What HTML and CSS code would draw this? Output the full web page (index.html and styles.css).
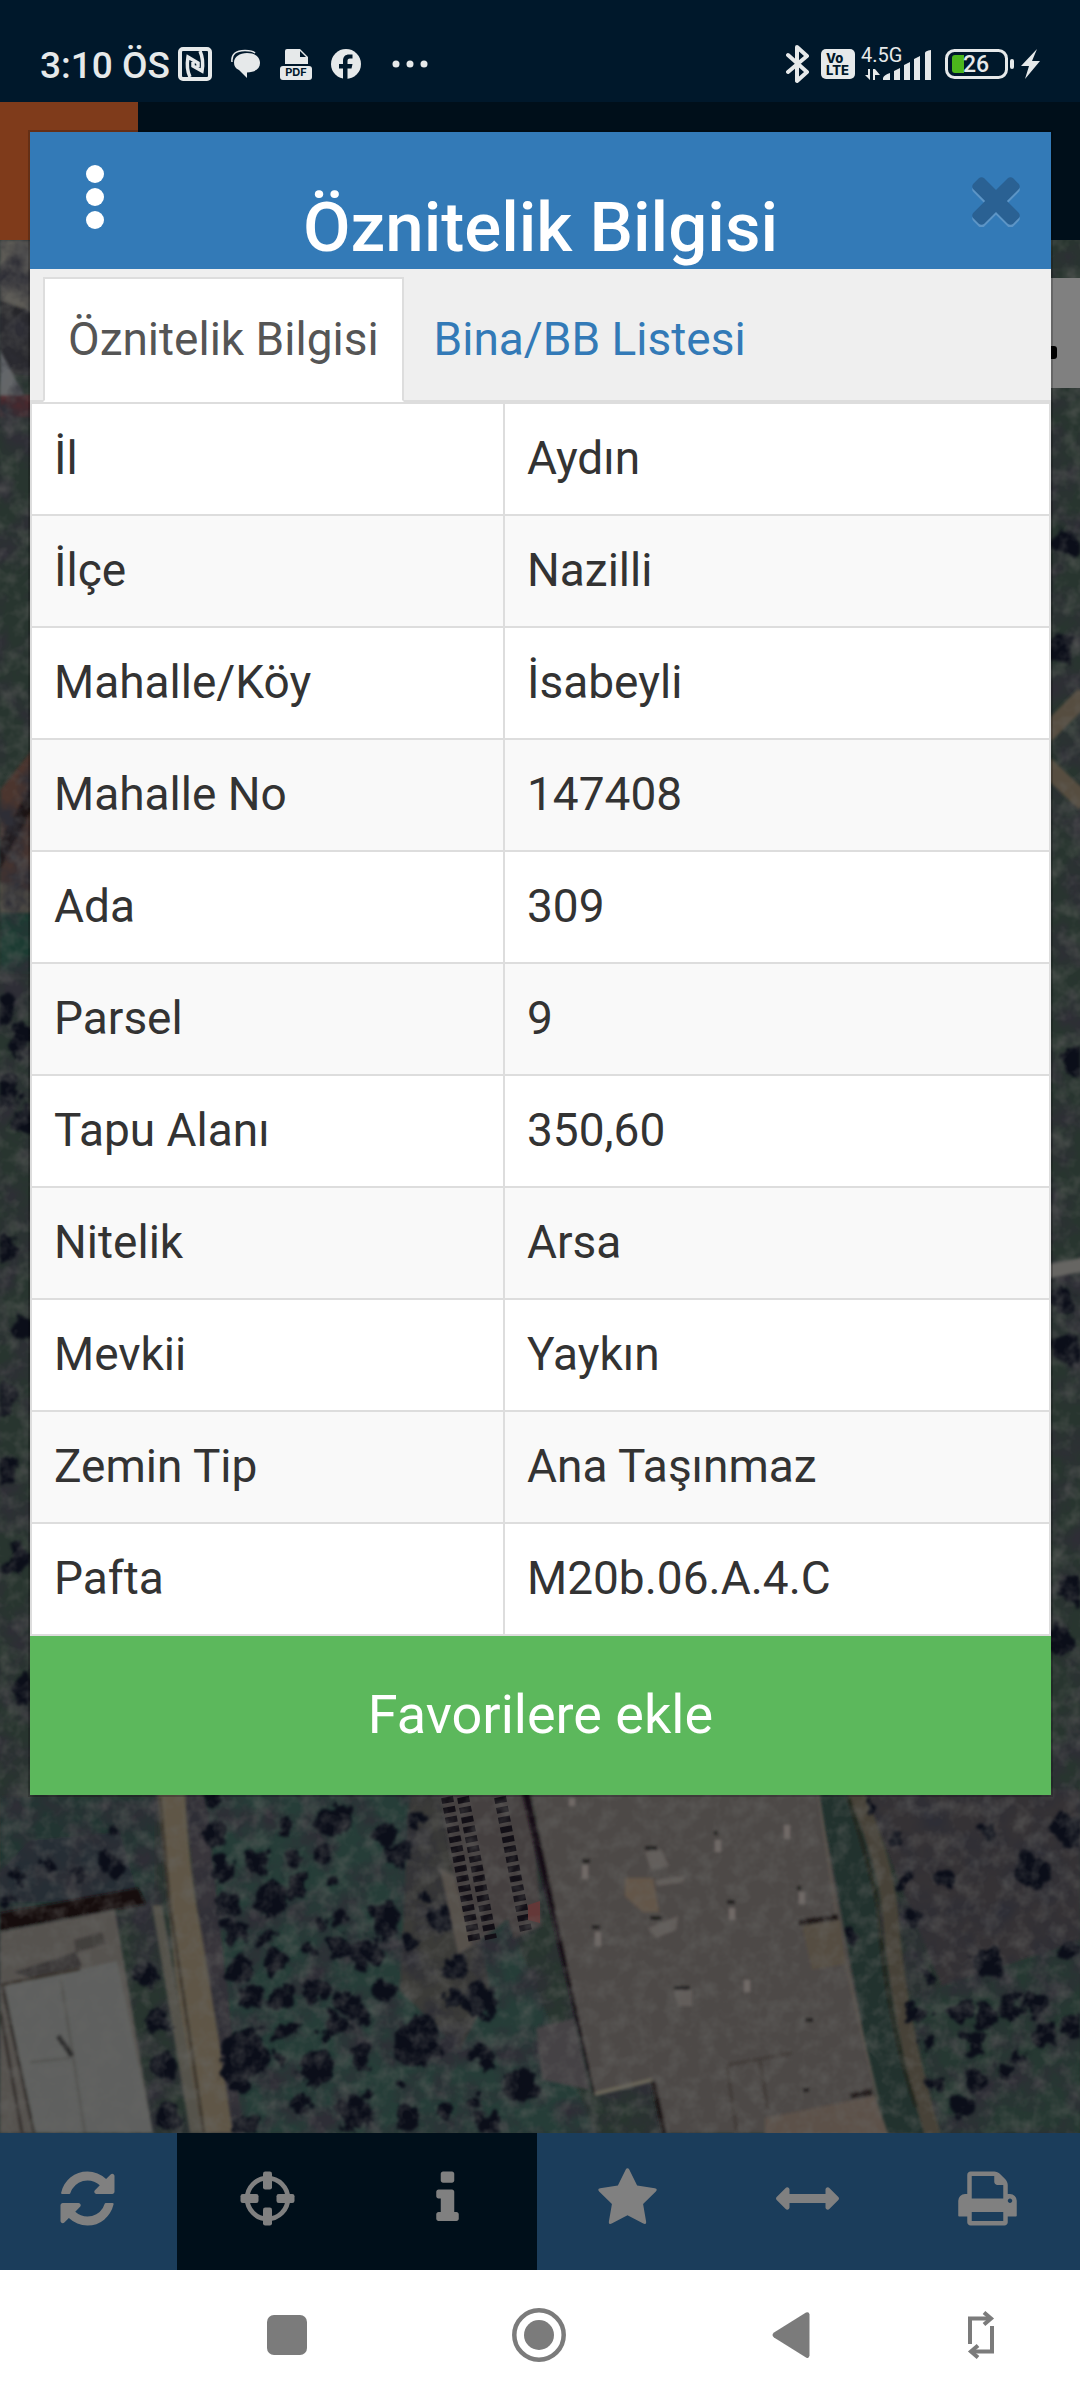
FILE: index.html
```html
<!DOCTYPE html>
<html lang="tr">
<head>
    <meta charset="UTF-8">
    <meta name="viewport" content="width=device-width, initial-scale=1.0">
    <title>Öznitelik Bilgisi</title>
    <link rel="stylesheet" href="styles.css">
</head>
<body>
    <div class="status-bar">
        <div class="status-left">
            <span class="clock">3:10 ÖS</span>
            <svg class="icon-nfc" width="34" height="34" viewBox="0 0 34 34" fill="none" stroke="currentColor">
                <rect x="2" y="2" width="30" height="30" rx="3" stroke-width="4"/>
                <path d="M12 30Q8 22 10 10L20 16V20M22 4Q26 13 24 24L15 19V15" stroke-width="3.500"/>
            </svg>
            <svg class="icon-chat" width="30" height="30" viewBox="0 0 30 30" fill="currentColor">
                <path d="M16 4c8 0 13 4 13 10s-5 9-13 9.500V29l-8-8C4.500 19.500 3 17 3 13.500 3 8 8.500 4 16 4z"/>
                <path d="M1 13C0 5 5 1.500 14 1.500c6 0 8 .5 10 2.500" fill="none" stroke="currentColor" stroke-width="1.500"/>
            </svg>
            <svg class="icon-pdf" width="32" height="32" viewBox="0 0 32 32" fill="currentColor">
                <path d="M5 3q0-2 2-2h13l8 8v7H5z"/>
                <path d="M20 3v6h6z" fill="#00182b"/>
                <rect x="0" y="18" width="32" height="14" rx="3"/>
                <text x="16" y="28" class="pdf-text" text-anchor="middle">PDF</text>
            </svg>
            <svg class="icon-fb" width="30" height="30" viewBox="0 0 30 30">
                <circle cx="15" cy="15" r="15" fill="currentColor"/>
                <path d="M12 31V19.500H8V15h4v-3c0-4.500 2.500-6.500 6-6.500h3.500v4H19c-2 0-2.500 1-2.500 2.500v3h5l-1 4.500h-4V31z" fill="#00182b"/>
            </svg>
            <svg class="icon-more" width="36" height="8" viewBox="0 0 36 8" fill="currentColor">
                <circle cx="4" cy="4" r="3.500"/><circle cx="18" cy="4" r="3.500"/><circle cx="32" cy="4" r="3.500"/>
            </svg>
        </div>
        <div class="status-right">
            <svg width="24" height="40" viewBox="0 0 24 40" fill="none" stroke="currentColor" stroke-width="4" stroke-linejoin="round" stroke-linecap="round">
                <path d="M2 11l19 17-10 9V3l10 9L2 28"/>
            </svg>
            <svg width="34" height="30" viewBox="0 0 34 30">
                <rect width="34" height="30" rx="5" fill="currentColor"/>
                <text class="volte-text" x="5" y="14">Vo</text>
                <text class="volte-text" x="5" y="26">LTE</text>
            </svg>
            <svg class="icon-signal" width="72" height="50" viewBox="0 -8 72 50" fill="currentColor">
                <text class="net-text" x="0" y="15">4.5G</text>
                <path d="M4 28l5 5V22H7v6zM12 22v11h2v-5h5l-5-6z"/>
                <path d="M22 33v-2q1-3 7-5v7zM33 33v-9l6-3v12zM43 33V18l6-3v18zM53 33V12l6-3v24zM64 33V6q0-2 6-3v30z"/>
            </svg>
            <svg class="icon-battery" width="70" height="30" viewBox="0 0 70 30">
                <rect x="1.500" y="1.500" width="60" height="27" rx="8" fill="none" stroke="currentColor" stroke-width="3"/>
                <path d="M19 6h-9q-3 0-3 3v12q0 3 3 3h9z" fill="#4cb71c"/>
                <rect x="65" y="10" width="4" height="10" rx="2" fill="currentColor"/>
                <text class="battery-text" x="18" y="23">26</text>
            </svg>
            <svg class="icon-bolt" width="20" height="30" viewBox="0 0 20 30" fill="currentColor">
                <path d="M16 0L0 17h8L4 30l15-18h-8z"/>
            </svg>
        </div>
    </div>

    <div class="app">
        <div class="app-header">
            <div class="app-logo"></div>
        </div>

        <div class="map">
            <svg class="map-image" viewBox="0 240 1080 1893" preserveAspectRatio="xMidYMax slice" aria-hidden="true">
                <defs>
                    <filter id="rough" x="0" y="240" width="1080" height="1893" filterUnits="userSpaceOnUse" color-interpolation-filters="sRGB">
                        <feTurbulence type="fractalNoise" baseFrequency="0.060" numOctaves="3" seed="4" result="n"/>
                        <feDisplacementMap in="SourceGraphic" in2="n" scale="24" xChannelSelector="R" yChannelSelector="G"/>
                        <feGaussianBlur stdDeviation="1.500"/>
                    </filter>
                    <!-- dark patches on the ground -->
                    <filter id="patches" x="0" y="0" width="100%" height="100%" color-interpolation-filters="sRGB">
                        <feTurbulence type="fractalNoise" baseFrequency="0.030" numOctaves="4" seed="9"/>
                        <feColorMatrix values="0 0 0 0 0.180  0 0 0 0 0.180  0 0 0 0 0.210  0 2.400 0 0 -0.900"/>
                    </filter>
                    <!-- light mottling over everything -->
                    <filter id="grain" x="0" y="0" width="100%" height="100%" color-interpolation-filters="sRGB">
                        <feTurbulence type="fractalNoise" baseFrequency="0.060" numOctaves="3" seed="2"/>
                        <feColorMatrix values="0 0 0 0 0.400  0 0 0 0 0.400  0 0 0 0 0.390  1 0 0 0 -0.420"/>
                    </filter>
                    <filter id="soft"><feGaussianBlur stdDeviation="1.500"/></filter>
                </defs>
                <rect y="240" width="1080" height="1893" fill="#28352f"/>

                <!-- left edge -->
                <g filter="url(#soft)">
                    <path d="M0 240h40v90L0 310z" fill="#5c5a55"/>
                    <path d="M0 300l40 15v60H0z" fill="#28252b"/>
                    <path d="M0 350l24 45H0z" fill="#64666a"/>
                    <path d="M0 395h40v22H0z" fill="#52282c"/>
                    <path d="M0 790l40-50v160H0z" fill="#4b342d"/>
                    <path d="M0 840l40-70v26L0 870z" fill="#170e0f"/>
                    <path d="M0 882l40 12v18H0z" fill="#5d584b"/>
                    <path d="M0 912h40v60H0z" fill="#1e3a30"/>
                </g>

                <!-- fields -->
                <g filter="url(#soft)">
                    <path d="M0 1797h155v110H0z" fill="#243530"/>
                    <path d="M30 1840l90-8 20 70H0v-30z" fill="#282d36"/>
                    <path d="M185 1790h270l140 343H233z" fill="#283d37"/>
                    <path d="M183 1790h22l38 343h-20z" fill="#39363b"/>
                    <path d="M410 1790h40l40 200-30 60-60-60z" fill="#3b3b37"/>
                    <path d="M862 1790h218v177l-130 40z" fill="#353236"/>
                    <path d="M900 2000l180-60v193H930z" fill="#283733"/>
                </g>
                <rect y="240" width="1080" height="1893" filter="url(#patches)"/>

                <!-- dirt roads -->
                <g filter="url(#soft)" fill="none" stroke="#574e41">
                    <path d="M1045 735l40-40M1045 765l40 38" stroke-width="18"/>
                    <path d="M1045 1272l40-8" stroke="#666562" stroke-width="14"/>
                    <path d="M157 1790h28q4 80 16 140l18 110 14 93h-35l-23-160z" fill="#5f5647" stroke="none"/>
                    <path d="M152 1905h10l40 228h-12z" fill="#54534b" stroke="none"/>
                    <path d="M160 1797l10 110 34 226" stroke="#37332a" stroke-width="3"/>
                    <path d="M818 1790h40l32 190 40 153h-50z" fill="#20322f" stroke="none"/>
                    <path d="M855 1790q30 70 35 120 8 110 43 225" stroke="#474239" stroke-width="16"/>
                    <path d="M848 1797q20 60 30 110 8 110 38 200" stroke="#20261f" stroke-width="4"/>
                </g>

                <!-- trees -->
                <g filter="url(#rough)" stroke="#0b0e19" stroke-linecap="round" fill="none">
                    <path stroke-width="50" d="M416 2040h.1M245 2055h.1"/>
                    <path stroke-width="34" d="M335 1820h.1M272 1900h.1M385 1920h.1M365 1950h.1M318 2070h.1M1035 1870h.1M1070 1830h.1M520 2085h.1M480 2000h.1M235 2075h.1M355 2115h.1M990 1965h.1"/>
                    <path stroke-width="24" d="M215 1800h.1M215 1833h.1M396 1855h.1M385 1835h.1M255 1860h.1M222 1870h.1M297 1885h.1M226 1905h.1M235 1935h.1M240 1970h.1M250 2000h.1M275 1962h.1M340 1950h.1M279 1996h.1M315 1990h.1M345 2000h.1M385 1992h.1M360 2015h.1M285 2030h.1M335 2025h.1M362 2055h.1M300 2102h.1M440 1920h.1M455 1965h.1M485 2057h.1M408 2115h.1M490 2125h.1M245 2128h.1M145 1975h.1M155 2022h.1M162 2063h.1M168 2115h.1M960 2010h.1M920 2015h.1M985 2015h.1M1010 2010h.1M1035 2005h.1M1045 2035h.1M975 2040h.1M980 2080h.1M960 2105h.1M1075 2025h.1M1068 1950h.1"/>
                    <path stroke-width="15" d="M283 1827h.1M416 1820h.1M330 1880h.1M295 1857h.1M320 1853h.1M340 1915h.1M323 1922h.1M268 1935h.1M308 1950h.1M410 1940h.1M425 1900h.1M322 2035h.1M400 2085h.1M365 2092h.1M455 2000h.1M475 2105h.1M445 2110h.1M280 2060h.1M105 1860h.1M118 1870h.1M115 1830h.1M15 1875h.1M50 1865h.1M80 1875h.1M10 1900h.1M895 1837h.1M905 1880h.1M945 1880h.1M988 1828h.1M915 1917h.1M850 1935h.1M872 1805h.1M930 1980h.1M925 2040h.1M935 2085h.1M1005 2070h.1M1020 2055h.1"/>
                    <path stroke-width="28" d="M2 1010h.1M22 1040h.1M5 1090h.1M26 1120h.1M4 1250h.1M22 1330h.1M3 1470h.1M18 1560h.1M26 1690h.1M1 1400h.1M1070 545h.1M1060 650h.1M1076 1060h.1M1066 1350h.1M1060 1300h.1M1075 1590h.1M1058 1640h.1"/>
                </g>

                <!-- warehouse on the left -->
                <g filter="url(#soft)">
                    <path d="M0 1913l138-25 8 16L0 1931z" fill="#120d11"/>
                    <path d="M0 1932l115-22 38 223H0z" fill="#565350"/>
                    <path d="M5 1984l76-15 36-8 36 172H32z" fill="#5f605e"/>
                    <path d="M14 1972l62-20 6 14-50 12z" fill="#3a3837"/>
                    <path d="M74 1940l28-8 4 12-30 9z" fill="#433f3c"/>
                    <path d="M2 1984l32 149M0 2010l22 123" stroke="#322d2b" stroke-width="3" fill="none"/>
                    <path d="M61 1980l24 153M30 2062l40-4" stroke="#555553" stroke-width="3" fill="none"/>
                    <path d="M58 2036l14 20" stroke="#2b2b2b" stroke-width="5"/>
                    <path d="M0 1985l80-16" stroke="#37302c" stroke-width="3"/>
                </g>

                <!-- parking rows -->
                <g filter="url(#soft)">
                    <path d="M440 1790h90l12 135-28 14-6-20-36 28-18-70z" fill="#454140"/>
                    <path d="M440 1868l14 8 18 70-14 8z" fill="#57514c"/>
                </g>
                <g stroke="#120f16" stroke-width="12" stroke-dasharray="6 4" fill="none">
                    <path d="M447 1797l28 146M463 1797l28 142M500 1797l26 134"/>
                </g>
                <path d="M528 1905l12-4v22l-12-3z" fill="#643838"/>

                <!-- factory roof -->
                <g filter="url(#soft)">
                    <path d="M525 1790l72 305" stroke="#140f12" stroke-width="7"/>
                    <path d="M536 2028l38-10 16 72-48-10z" fill="#454245"/>
                    <path d="M530 1790h288l64 343H664l-12-52-57 13z" fill="#4e4846"/>
                    <path d="M595 2094l57-14" stroke="#696559" stroke-width="4" fill="none"/>
                    <path d="M818 1790l22 150 38 160" stroke="#5b564f" stroke-width="2" fill="none"/>
                    <path d="M653 2081l11 52" stroke="#1b1618" stroke-width="5"/>
                    <path d="M765 2118l110-22 14 40H765z" fill="#5c5148"/>
                    <path d="M727 2065l65-12M727 2067l10 66M760 2060l8 50" stroke="#403b39" stroke-width="3" fill="none"/>
                    <path d="M625 1878h28l6 34h-16l-18-16z" fill="#63564a"/>
                    <path d="M645 1852l16-2 8 16-18 4zM655 1880l30-4-2 6-26 4zM648 1928l30-12-2 14-20 8zM674 1990h18v16h-14z" fill="#625d5a"/>
                    <path d="M585 1865v14M718 1840v12M787 1825v14M598 1932v14M732 1908v12M802 1892v12M747 1980v12M572 1798v8" stroke="#716b68" stroke-width="6"/>
                    <path d="M645 1848h12M582 1861h8M714 1833h4M592 1927h8M727 1902h8M797 1888h4M674 1988h16M805 2020h8M803 2090h6M650 1918h12" stroke="#1f1a1b" stroke-width="4"/>
                    <path d="M802 1926l38-6 6 44-34 6z" fill="#554e42"/>
                    <path d="M798 1923l40-6M850 2096l22-4" stroke="#1a1513" stroke-width="6"/>
                </g>
                <rect y="240" width="1080" height="1893" filter="url(#grain)"/>
            </svg>
            <button class="layers-btn" aria-label="Katmanlar"></button>
        </div>

        <div class="toolbar">
            <button class="tool" aria-label="Yenile">
                <svg viewBox="0 0 1792 1792"><path d="M1639 1056q0 5-1 7-64 268-268 434.500t-478 166.500q-146 0-282.500-55t-243.500-157l-129 129q-19 19-45 19t-45-19-19-45v-448q0-26 19-45t45-19h448q26 0 45 19t19 45-19 45l-137 137q71 66 161 102t187 36q134 0 250-65t186-179q11-17 53-117 8-23 30-23h192q13 0 22.500 9.500t9.500 22.500zm25-800v448q0 26-19 45t-45 19h-448q-26 0-45-19t-19-45 19-45l138-138q-148-137-349-137-134 0-250 65t-186 179q-11 17-53 117-8 23-30 23h-199q-13 0-22.500-9.500t-9.500-22.500v-7q65-268 270-434.500t480-166.500q146 0 284 55.500t245 156.500l130-129q19-19 45-19t45 19 19 45z"/></svg>
            </button>
            <button class="tool tool-dark" aria-label="Konum">
                <svg viewBox="0 0 1792 1792">
                    <circle cx="896" cy="896" r="580" fill="none" stroke="currentColor" stroke-width="136"/>
                    <rect x="768" y="128" width="256" height="512" rx="64"/>
                    <rect x="768" y="1152" width="256" height="512" rx="64"/>
                    <rect x="128" y="768" width="512" height="256" rx="64"/>
                    <rect x="1152" y="768" width="512" height="256" rx="64"/>
                </svg>
            </button>
            <button class="tool tool-dark" aria-label="Bilgi">
                <svg viewBox="0 0 1792 1792"><path d="M1216 1344v128q0 26-19 45t-45 19h-512q-26 0-45-19t-19-45v-128q0-26 19-45t45-19h64v-384h-64q-26 0-45-19t-19-45v-128q0-26 19-45t45-19h384q26 0 45 19t19 45v576h64q26 0 45 19t19 45zm-128-1152v192q0 26-19 45t-45 19h-256q-26 0-45-19t-19-45v-192q0-26 19-45t45-19h256q26 0 45 19t19 45z"/></svg>
            </button>
            <button class="tool" aria-label="Favoriler">
                <svg viewBox="0 0 1792 1792"><path d="M1728 647q0 22-26 48l-363 354 86 500q1 7 1 20 0 21-10.500 35.500t-30.500 14.500q-19 0-40-12l-449-236-449 236q-22 12-40 12-21 0-31.500-14.500t-10.500-35.500q0-6 2-20l86-500-364-354q-25-27-25-48 0-37 56-46l502-73 225-455q19-41 49-41t49 41l225 455 502 73q56 9 56 46z"/></svg>
            </button>
            <button class="tool" aria-label="Ölçüm">
                <svg viewBox="0 0 1792 1792"><path d="M1792 896q0 26-19 45l-256 256q-19 19-45 19t-45-19-19-45v-128h-1024v128q0 26-19 45t-45 19-45-19l-256-256q-19-19-19-45t19-45l256-256q19-19 45-19t45 19 19 45v128h1024v-128q0-26 19-45t45-19 45 19l256 256q19 19 19 45z"/></svg>
            </button>
            <button class="tool" aria-label="Yazdır">
                <svg viewBox="0 0 1792 1792"><path d="M448 1536h896v-256h-896v256zm0-640h896v-384h-160q-40 0-68-28t-28-68v-160h-640v640zm1152 64q0-26-19-45t-45-19-45 19-19 45 19 45 45 19 45-19 19-45zm128 0v416q0 13-9.500 22.500t-22.500 9.500h-224v160q0 40-28 68t-68 28h-960q-40 0-68-28t-28-68v-160h-224q-13 0-22.500-9.500t-9.500-22.500v-416q0-79 56.500-135.500t135.500-56.500h64v-544q0-40 28-68t68-28h672q40 0 88 20t76 48l152 152q28 28 48 76t20 88v256h64q79 0 135.500 56.500t56.500 135.500z"/></svg>
            </button>
        </div>

        <div class="modal" role="dialog" aria-labelledby="modal-title">
            <div class="modal-header">
                <button class="menu-btn" aria-label="Menü">
                    <svg width="18" height="66" viewBox="0 0 18 66" fill="currentColor">
                        <circle cx="9" cy="10" r="9"/><circle cx="9" cy="33" r="9"/><circle cx="9" cy="56" r="9"/>
                    </svg>
                </button>
                <h4 class="modal-title" id="modal-title">Öznitelik Bilgisi</h4>
                <button class="close-btn" aria-label="Kapat">
                    <svg width="48" height="50" viewBox="296 360 1200 1250">
                        <path fill="#5d95c6" transform="translate(0 72)" d="M1490 1322q0 40-28 68l-136 136q-28 28-68 28t-68-28l-294-294-294 294q-28 28-68 28t-68-28l-136-136q-28-28-28-68t28-68l294-294-294-294q-28-28-28-68t28-68l136-136q28-28 68-28t68 28l294 294 294-294q28-28 68-28t68 28l136 136q28 28 28 68t-28 68l-294 294 294 294q28 28 28 68z"/>
                        <path fill="#2a6193" d="M1490 1322q0 40-28 68l-136 136q-28 28-68 28t-68-28l-294-294-294 294q-28 28-68 28t-68-28l-136-136q-28-28-28-68t28-68l294-294-294-294q-28-28-28-68t28-68l136-136q28-28 68-28t68 28l294 294 294-294q28-28 68-28t68 28l136 136q28 28 28 68t-28 68l-294 294 294 294q28 28 28 68z"/>
                    </svg>
                </button>
            </div>
            <ul class="tabs">
                <li><a class="tab active" href="#oznitelik">Öznitelik Bilgisi</a></li>
                <li><a class="tab" href="#bina">Bina/BB Listesi</a></li>
            </ul>
            <table class="info-table" id="oznitelik">
                <tr><td class="label">İl</td><td>Aydın</td></tr>
                <tr><td>İlçe</td><td>Nazilli</td></tr>
                <tr><td>Mahalle/Köy</td><td>İsabeyli</td></tr>
                <tr><td>Mahalle No</td><td>147408</td></tr>
                <tr><td>Ada</td><td>309</td></tr>
                <tr><td>Parsel</td><td>9</td></tr>
                <tr><td>Tapu Alanı</td><td>350,60</td></tr>
                <tr><td>Nitelik</td><td>Arsa</td></tr>
                <tr><td>Mevkii</td><td>Yaykın</td></tr>
                <tr><td>Zemin Tip</td><td>Ana Taşınmaz</td></tr>
                <tr><td>Pafta</td><td>M20b.06.A.4.C</td></tr>
            </table>
            <button class="fav-btn">Favorilere ekle</button>
        </div>
    </div>

    <div class="nav-bar">
        <button class="nav-btn" aria-label="Son uygulamalar">
            <svg width="40" height="40" viewBox="0 0 40 40"><rect width="40" height="40" rx="7" fill="currentColor"/></svg>
        </button>
        <button class="nav-btn" aria-label="Ana ekran">
            <svg width="54" height="54" viewBox="0 0 54 54">
                <circle cx="27" cy="27" r="24.700" fill="none" stroke="currentColor" stroke-width="4.500"/>
                <circle cx="27" cy="27" r="15" fill="currentColor"/>
            </svg>
        </button>
        <button class="nav-btn" aria-label="Geri">
            <svg width="38" height="46" viewBox="0 0 38 46"><path d="M2 20.500L34 .6q3-1.500 3.500 2v41q-.5 3.500-3.500 1.800L2 25.500q-3-2.500 0-5z" fill="currentColor"/></svg>
        </button>
        <button class="nav-btn nav-rotate" aria-label="Döndür">
            <svg width="28" height="48" viewBox="0 0 28 48" fill="none" stroke="currentColor" stroke-width="4">
                <path d="M3 33V7.500h20M25 15v25.500H5"/>
                <path d="M17 1.500l7 6-7 6M11 34.500l-7 6 7 6"/>
            </svg>
        </button>
    </div>
</body>
</html>
```

FILE: styles.css
```css
* {
    box-sizing: border-box;
}
body {
    margin: 0;
    min-height: 100vh;
    display: flex;
    flex-direction: column;
    font-family: Roboto, "Liberation Sans", sans-serif;
    font-size: 46px;
    line-height: 66px;
    color: #333;
    background-color: #fff;
}
button {
    font-family: inherit;
    border: none;
    padding: 0;
    background: none;
    cursor: pointer;
}
svg {
    display: block;
}

/* status bar */
.status-bar {
    display: flex;
    justify-content: space-between;
    height: 102px;
    padding: 26px 39px 0 40px;
    background-color: #00182b;
    color: #e6e9ea;
}
.status-left,
.status-right {
    display: flex;
    align-items: center;
    height: 76px;
}
.clock {
    margin-right: 8px;
    padding-top: 4px;
    font-size: 37px;
    font-weight: 500;
}
.icon-nfc,
.icon-chat,
.icon-pdf {
    margin-right: 19px;
}
.icon-fb {
    margin-right: 31px;
}
.status-right svg {
    margin-right: 11px;
}
.status-right .icon-signal {
    margin-left: -5px;
    margin-right: 12px;
}
.status-right .icon-battery {
    margin-right: 6px;
}
.status-right .icon-bolt {
    margin-right: 0;
}
.pdf-text {
    font: 700 11px Inter, sans-serif;
    fill: #00182b;
}
.volte-text {
    font: 800 13px Inter, sans-serif;
    fill: #00182b;
}
.net-text {
    font-size: 20px;
}
.battery-text {
    font-size: 23px;
    font-weight: 500;
    fill: #e6e9ea;
}

/* app */
.app {
    position: relative;
    flex: 1;
    display: flex;
    flex-direction: column;
    overflow: hidden;
}
.app-header {
    height: 138px;
    background-color: #000f1a;
}
.app-logo {
    width: 138px;
    height: 138px;
    background-color: #7f3b1b;
}
.map {
    position: relative;
    flex: 1;
    min-height: 400px;
    overflow: hidden;
}
.map-image {
    position: absolute;
    width: 100%;
    height: 100%;
}
.layers-btn {
    position: absolute;
    top: 38px;
    right: 0;
    width: 110px;
    height: 110px;
    background-color: #808080;
}
.layers-btn::after {
    content: "";
    position: absolute;
    left: 40px;
    top: 68px;
    width: 47px;
    height: 13px;
    border-radius: 3px;
    background-color: #000;
}

.toolbar {
    display: flex;
    height: 137px;
    margin-left: -3px;
    padding-right: 3px;
    background-color: #1b3d5b;
}
.tool {
    flex: 1;
    display: flex;
    align-items: center;
    justify-content: center;
    padding-bottom: 6px;
    color: #808080;
}
.tool svg {
    width: 63px;
    height: 63px;
    fill: currentColor;
}
.tool-dark {
    background-color: #000f1a;
}

/* modal */
.modal {
    position: absolute;
    top: 28px;
    left: 28px;
    right: 27px;
    border: 2px solid rgba(0, 0, 0, 0.2);
    background-color: #fff;
    background-clip: padding-box;
}
.modal-header {
    display: grid;
    grid-template-columns: 1fr auto 1fr;
    height: 137px;
    background-color: #337ab7;
    color: #fff;
}
.menu-btn {
    justify-self: start;
    align-self: start;
    padding: 32px 56px;
    color: #fff;
}
.modal-title {
    align-self: end;
    margin: 0;
    padding-bottom: 8px;
    font-size: 69px;
    font-weight: 500;
    line-height: 72px;
}
.close-btn {
    justify-self: end;
    align-self: start;
    padding: 45px 31px;
}
.tabs {
    display: flex;
    gap: 5px;
    margin: 0;
    padding: 8px 13px 0;
    list-style: none;
    background-color: #efefef;
    border-bottom: 2px solid #ddd;
}
.tab {
    display: block;
    margin-bottom: -2px;
    padding: 27px 23px 28px;
    border: 2px solid transparent;
    color: #337ab7;
    text-decoration: none;
}
.tab.active {
    color: #555;
    background-color: #fff;
    border-color: #ddd;
    border-bottom-color: #fff;
}
.info-table {
    width: 100%;
    border-collapse: collapse;
}
.info-table td {
    padding: 21px 22px 23px;
    border: 2px solid #ddd;
}
.info-table tr:nth-child(even) {
    background-color: #f9f9f9;
}
.info-table .label {
    width: 473px;
}
.fav-btn {
    display: block;
    width: 100%;
    height: 159px;
    padding-bottom: 2px;
    font-size: 54px;
    color: #fff;
    background-color: #5cb85c;
}

/* android navigation */
.nav-bar {
    display: flex;
    justify-content: center;
    height: 130px;
    padding-left: 126px;
    background-color: #fff;
}
.nav-btn {
    display: flex;
    align-items: center;
    justify-content: center;
    width: 252px;
    color: #7b7b7b;
}
.nav-rotate {
    width: 128px;
}
```
